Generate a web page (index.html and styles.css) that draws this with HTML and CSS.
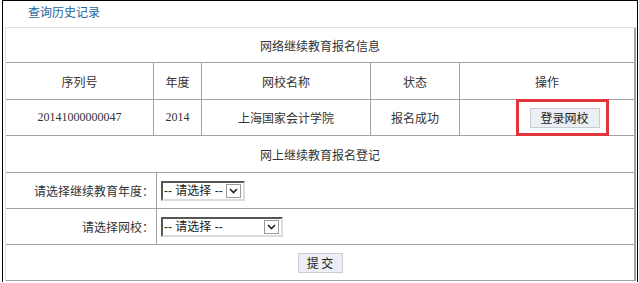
FILE: index.html
```html
<!DOCTYPE html>
<html lang="zh-CN">
<head>
<meta charset="utf-8">
<title>网络继续教育报名信息</title>
<link rel="stylesheet" href="styles.css">
</head>
<body>
<div class="frame">
  <div class="top"><a class="history" href="#">查询历史记录</a></div>
  <table class="grid info">
    <colgroup>
      <col class="k1"><col class="k2"><col class="k3"><col class="k4"><col>
    </colgroup>
    <tr class="r-title">
      <td colspan="5">网络继续教育报名信息</td>
    </tr>
    <tr class="r-head">
      <td>序列号</td>
      <td>年度</td>
      <td>网校名称</td>
      <td>状态</td>
      <td>操作</td>
    </tr>
    <tr class="r-data">
      <td>20141000000047</td>
      <td>2014</td>
      <td class="cjk">上海国家会计学院</td>
      <td class="cjk">报名成功</td>
      <td class="op"><span class="mark"><button class="btn login" type="button">登录网校</button></span></td>
    </tr>
  </table>
  <table class="grid form">
    <colgroup>
      <col class="kl"><col>
    </colgroup>
    <tr class="r-title2">
      <td colspan="2">网上继续教育报名登记</td>
    </tr>
    <tr class="r-form">
      <td class="lbl">请选择继续教育年度：</td>
      <td class="fld">
        <span class="sel short">
          <select><option>-- 请选择 --</option></select>
          <span class="arr"><svg width="9" height="6" viewBox="0 0 9 6"><polyline points="1,1 4.5,4.5 8,1" fill="none" stroke="#222" stroke-width="1.6"/></svg></span>
        </span>
      </td>
    </tr>
    <tr class="r-form">
      <td class="lbl">请选择网校：</td>
      <td class="fld">
        <span class="sel long">
          <select><option>-- 请选择 --</option></select>
          <span class="arr"><svg width="9" height="6" viewBox="0 0 9 6"><polyline points="1,1 4.5,4.5 8,1" fill="none" stroke="#222" stroke-width="1.6"/></svg></span>
        </span>
      </td>
    </tr>
    <tr class="r-submit">
      <td colspan="2"><button class="btn submit" type="submit">提 交</button></td>
    </tr>
  </table>
</div>
</body>
</html>
```
FILE: styles.css
```css
html, body {
  margin: 0;
  padding: 0;
  background: #fff;
}
body {
  font-family: "Liberation Serif", "Noto Sans CJK SC", serif;
  font-size: 12px;
  color: #333;
}
.frame {
  margin-left: 2px;
  width: 636px;
  box-sizing: border-box;
  border-top: 1px solid #000;
  border-left: 1px solid #000;
  border-right: 1px solid #000;
  height: 282px;
}
.top {
  height: 26px;
  box-sizing: border-box;
  padding: 3px 0 0 25px;
  line-height: 16px;
}
.history {
  font-family: "Noto Sans CJK SC", sans-serif;
  color: #23669f;
  text-decoration: none;
  font-size: 12px;
}
.grid {
  margin-left: 2px;
  width: 631px;
  border-collapse: separate;
  border-spacing: 0;
  table-layout: fixed;
  border-left: 1px solid #e2e2e2;
  border-right: 1px solid #a3a3a3;
}
.info {
  border-top: 1px solid #e2e2e2;
}
.k1 { width: 148px; }
.k2 { width: 48px; }
.k3 { width: 169px; }
.k4 { width: 89px; }
.kl { width: 151px; }
.grid td {
  padding: 0;
  border-right: 1px solid #a3a3a3;
  border-bottom: 1px solid #a3a3a3;
  text-align: center;
  vertical-align: middle;
  box-sizing: border-box;
}
.r-title td { height: 35px; }
.r-head td { height: 37px; }
.r-data td { height: 36px; }
.r-title2 td { height: 37px; }
.r-form td { height: 36px; }
.r-submit td { height: 36px; }
.r-title td, .r-head td, .r-title2 td, .lbl, .cjk {
  font-family: "Noto Sans CJK SC", sans-serif;
}
.grid td.op {
  padding-left: 35px;
}
.mark {
  position: relative;
  display: inline-block;
  vertical-align: middle;
}
.mark::after {
  content: "";
  position: absolute;
  top: -9px;
  left: -14px;
  right: -9px;
  bottom: -8px;
  border: 3px solid #e2363c;
  pointer-events: none;
}
.btn {
  font-family: "Noto Sans CJK SC", sans-serif;
  font-size: 12px;
  color: #222;
  background: #ebeef2;
  border: 1px solid #c9cdd3;
  border-radius: 0;
  height: 20px;
  padding: 0;
  margin: 0;
  line-height: 18px;
  display: block;
}
.login {
  width: 70px;
}
.submit {
  width: 45px;
  margin: 1px auto 0;
}
.grid td.lbl {
  text-align: right;
  padding-right: 2px;
}
.grid td.fld {
  text-align: left;
  padding-left: 4px;
}
.sel {
  display: inline-flex;
  align-items: center;
  height: 20px;
  box-sizing: border-box;
  border-top: 2px solid #555;
  border-left: 2px solid #555;
  border-right: 2px solid #dcdcdc;
  border-bottom: 2px solid #dcdcdc;
  background: #fff;
  vertical-align: middle;
}
.sel.short { width: 84px; }
.sel.long { width: 122px; }
.sel select {
  -webkit-appearance: none;
  appearance: none;
  border: 0;
  outline: 0;
  background: transparent;
  font-family: "Liberation Sans", "Noto Sans CJK SC", sans-serif;
  font-size: 12px;
  color: #222;
  padding: 0 0 0 1px;
  margin: 0;
  height: 16px;
  line-height: 16px;
  flex: 1;
  min-width: 0;
}
.arr {
  width: 15px;
  height: 14px;
  box-sizing: border-box;
  border: 1px solid #9a9a9a;
  background: #fff;
  display: flex;
  align-items: center;
  justify-content: center;
  margin-right: 2px;
}
```
